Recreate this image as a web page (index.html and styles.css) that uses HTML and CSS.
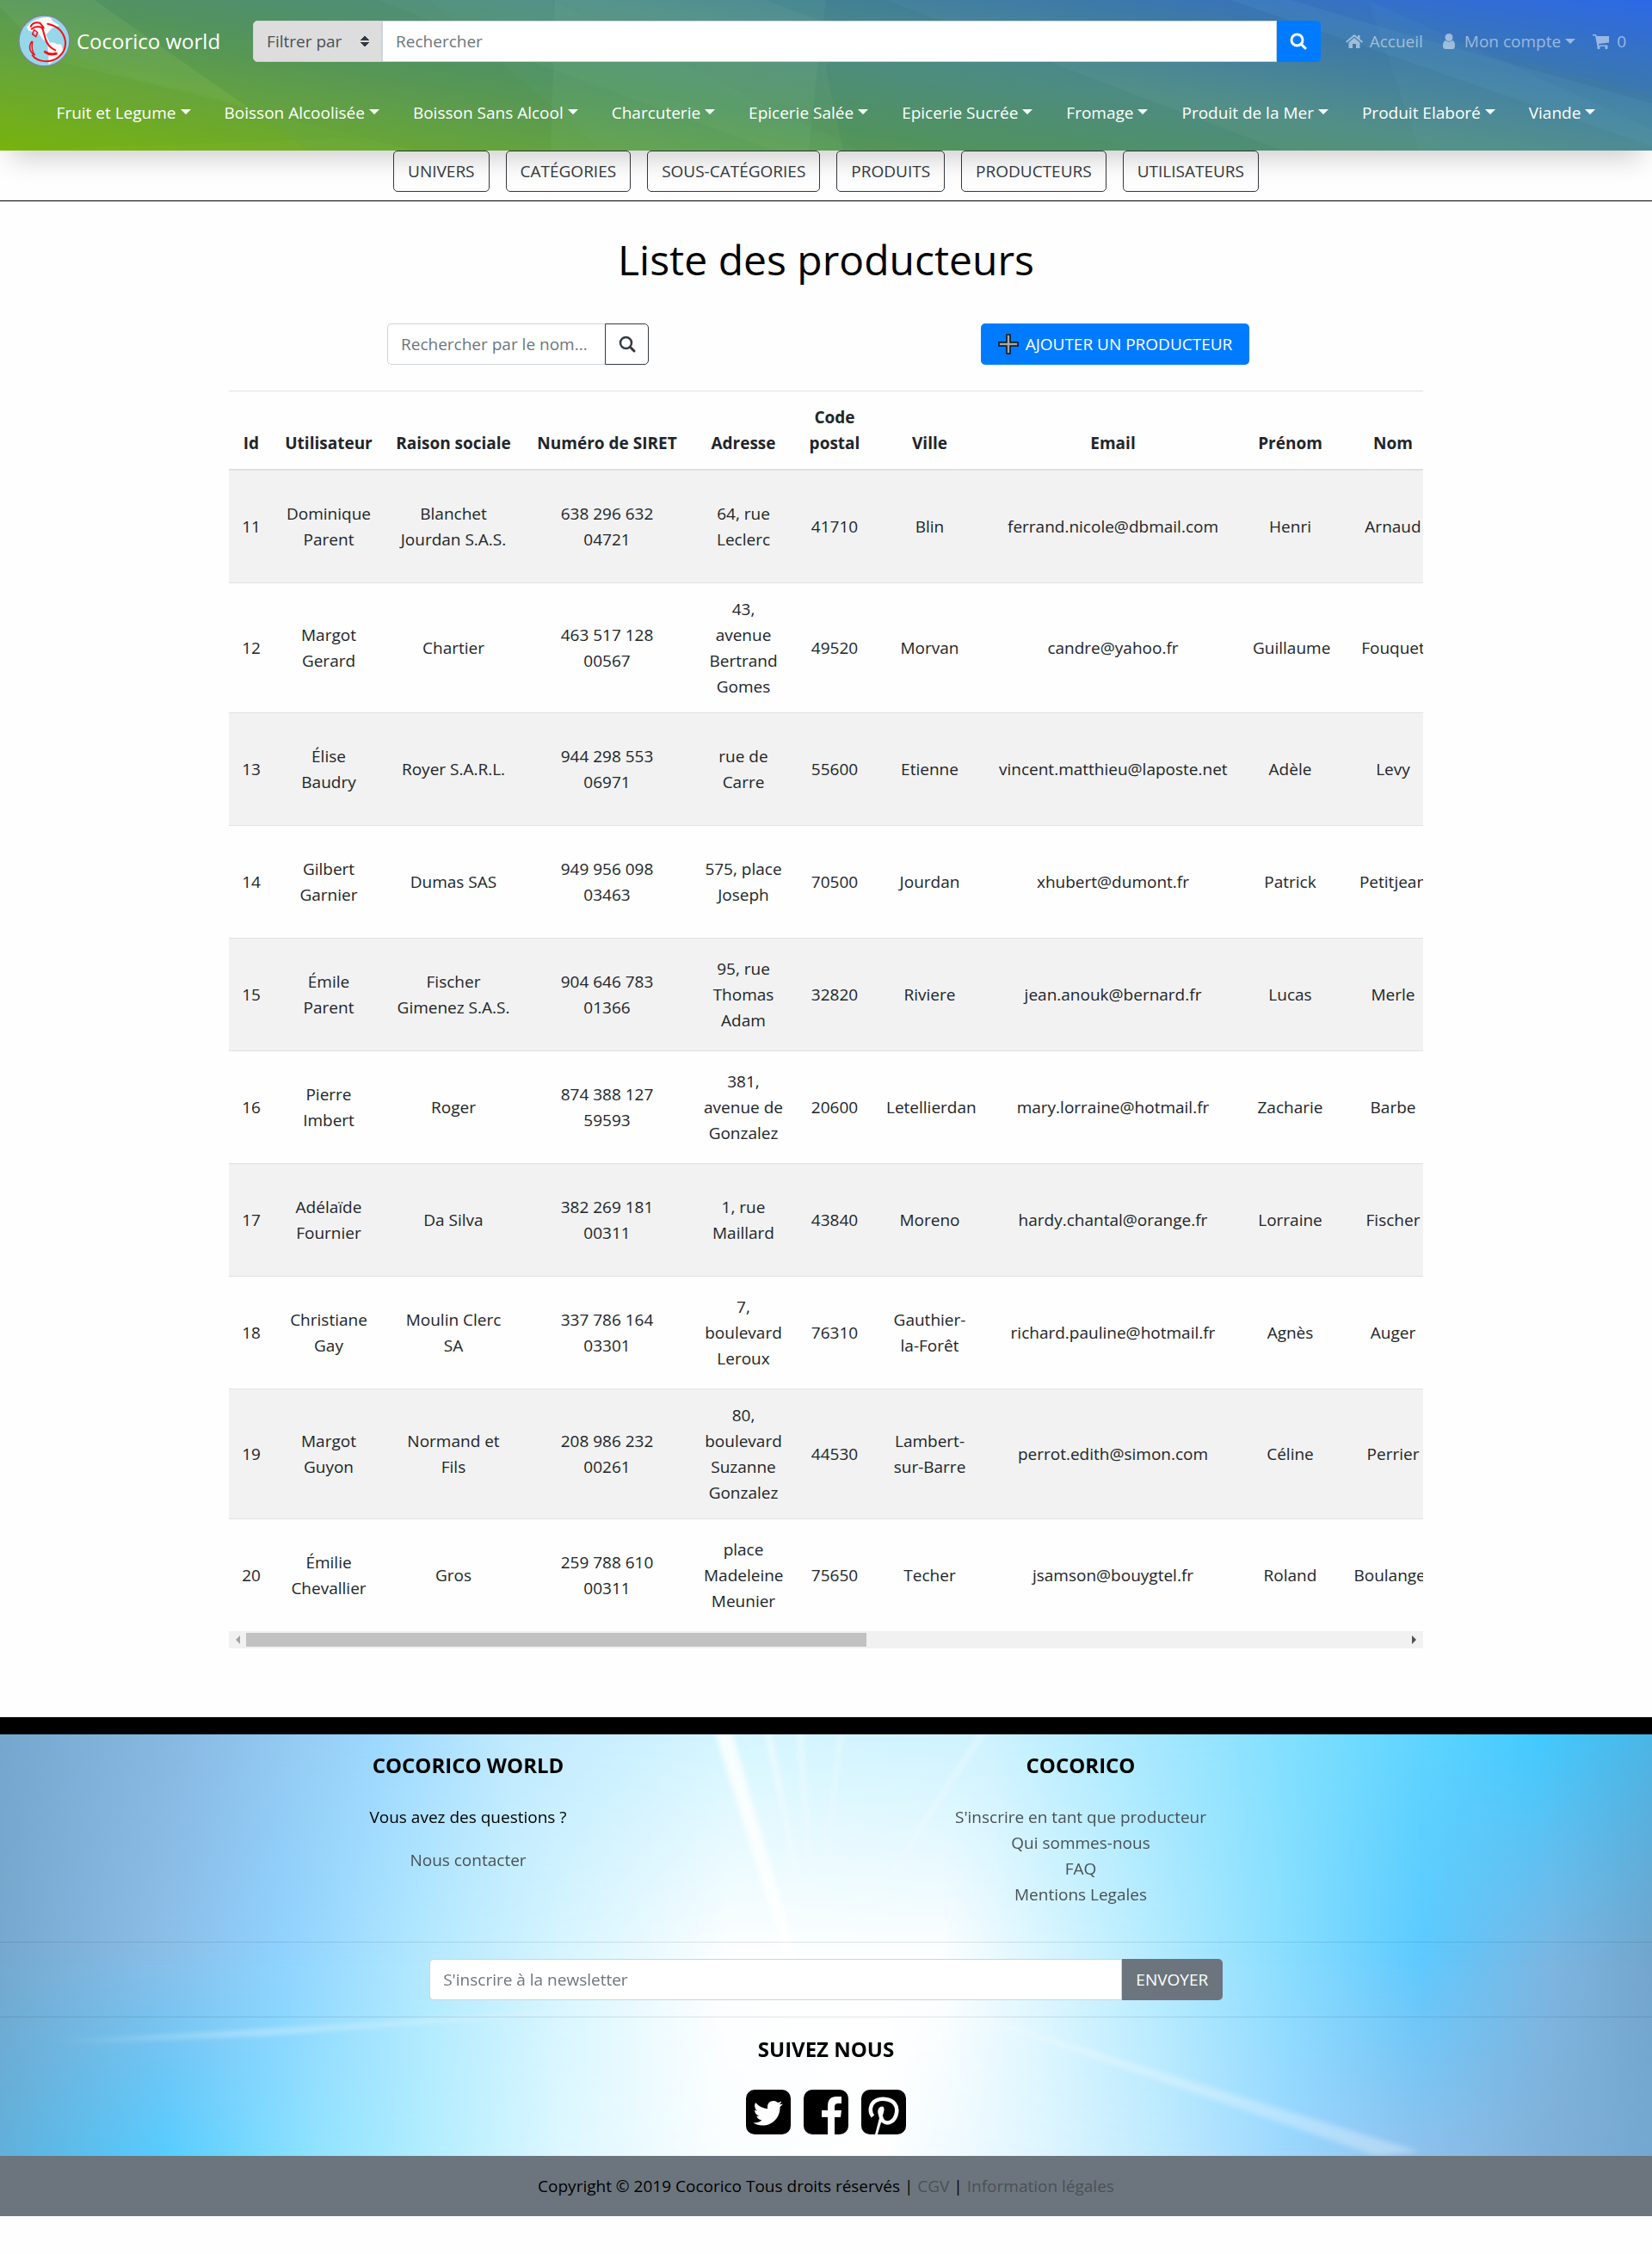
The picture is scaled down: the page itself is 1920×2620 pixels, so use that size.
FILE: index.html
```html
<!DOCTYPE html>
<html lang="fr"><head><meta charset="utf-8"><title>Cocorico world</title><link rel="stylesheet" href="styles.css"></head>
<body>
<header class="top">
<svg class="facets" viewBox="0 0 1920 175" preserveAspectRatio="none" aria-hidden="true">
<path d="M0 10Q60 75 240 110L420 160 0 175z" fill="#5c9c10" opacity=".1"/><path d="M0 0H110L360 175H480L300 128 60 70 0 8z" fill="#8fd070" opacity=".1"/><path d="M110 0H440L640 80 900 175H360z" fill="#2c7050" opacity=".08"/><path d="M500 0H640L1000 175H700z" fill="#7cc0a8" opacity=".05"/><path d="M640 175L645 0H960L950 80 940 175z" fill="#a0e0b0" opacity=".07"/><path d="M890 0H1030L1490 175H980L960 80 970 30z" fill="#10605a" opacity=".08"/><path d="M1430 0H1500L1600 30 1920 120V170z" fill="#70b8e0" opacity=".1"/><path d="M1590 0H1920V110L1620 30z" fill="#3070e0" opacity=".12"/><path d="M1590 0L1650 175H1920V150z" fill="#70b8d0" opacity=".06"/>
</svg>
<div class="bar">
<a class="brand" href="#"><svg class="logo" viewBox="0 0 64 64"><circle cx="32" cy="32" r="30" fill="#97d7ea" stroke="#7d858c" stroke-width="1.500"/><path d="M11 16Q20 4 36 4L40 5 42 9 50 14 41 17 34 25 39 35 31 31 25 23 14 20zM36 37Q40 31 47 36L52 36 54 43 46 54 37 60 37 49z" fill="#fdf8f5"/><g fill="none" stroke="#f40d15" stroke-linecap="round"><path d="M16 15Q19 9 27 11L31 16M17 18Q23 13 31 17" stroke-width="2"/><path d="M20 19L18 24 22 27 24 22z" stroke-width="1.500"/><path d="M29 16C34 25 31 37 45 43M36 12Q55 16 57 34C57 49 44 57 32 56Q22 55 18 49" stroke-width="2"/><path d="M17 33Q11 43 21 49Q16 43 18 33" stroke-width="1.500"/><path d="M33 45Q38 49 46 47" stroke-width="3"/></g></svg>Cocorico world</a>
<form class="search">
<select class="filter" aria-label="Filtrer par"><option>Filtrer par</option></select>
<input class="field" type="text" placeholder="Rechercher" aria-label="Rechercher">
<button class="go" type="button" aria-label="Lancer la recherche"><svg class="ico" viewBox="0 0 20 20"><circle cx="8.500" cy="8.500" r="6.500" fill="none" stroke="currentColor" stroke-width="3"/><path d="M13.500 13.500l4.500 4.500" stroke="currentColor" stroke-width="3" stroke-linecap="round"/></svg></button>
</form>
<nav class="account">
<a href="#"><svg class="ico" viewBox="0 0 20 20"><path d="M10 6L3.500 11.500V18H8V13h4v5h4.500v-6.500zM10 2L0 10.300l1.200 1.400L10 4.500l8.800 7.200L20 10.300 16.500 7.400V3H14v2.300z" fill="currentColor"/></svg>Accueil</a>
<a class="caret" href="#"><svg class="ico" viewBox="0 0 20 20"><circle cx="10" cy="5.500" r="4.500" fill="currentColor"/><path d="M6 9Q3 10 3 15Q3 19 6 19h8q3 0 3-4Q17 10 14 9Q10 12.500 6 9z" fill="currentColor"/></svg>Mon compte</a>
<a href="#"><svg class="ico" viewBox="0 0 20 20"><path d="M0 2h4l.6 2H19v7.500L7 13v1.500h10.500V16H5.500L3 3.500H0z" fill="currentColor"/><circle cx="7" cy="17.500" r="1.700" fill="currentColor"/><circle cx="16" cy="17.500" r="1.700" fill="currentColor"/></svg>0</a>
</nav>
</div>
<nav class="cats"><a class="caret" href="#">Fruit et Legume</a><a class="caret" href="#">Boisson Alcoolisée</a><a class="caret" href="#">Boisson Sans Alcool</a><a class="caret" href="#">Charcuterie</a><a class="caret" href="#">Epicerie Salée</a><a class="caret" href="#">Epicerie Sucrée</a><a class="caret" href="#">Fromage</a><a class="caret" href="#">Produit de la Mer</a><a class="caret" href="#">Produit Elaboré</a><a class="caret" href="#">Viande</a></nav>
</header>
<nav class="admin"><a href="#">UNIVERS</a><a href="#">CATÉGORIES</a><a href="#">SOUS-CATÉGORIES</a><a href="#">PRODUITS</a><a href="#">PRODUCTEURS</a><a href="#">UTILISATEURS</a></nav>
<main class="page">
<h1>Liste des producteurs</h1>
<div class="tools">
<form class="find"><input class="field" type="text" placeholder="Rechercher par le nom..." aria-label="Rechercher par le nom"><button class="find-go" type="button" aria-label="Rechercher"><svg class="ico" viewBox="0 0 20 20"><circle cx="8.500" cy="8.500" r="6.500" fill="none" stroke="currentColor" stroke-width="2.500"/><path d="M13.500 13.500l4.500 4.500" stroke="currentColor" stroke-width="3" stroke-linecap="round"/></svg></button></form>
<button class="add" type="button"><svg class="plus" viewBox="0 0 24 24"><path d="M10 1h4v9h9v4h-9v9h-4v-9H1v-4h9z" fill="#a8a8a8" stroke="#111" stroke-width="1.500"/></svg>AJOUTER UN PRODUCTEUR</button>
</div>
<div class="scroller">
<table>
<colgroup><col class="c-id"><col class="c-user"><col class="c-name"><col class="c-siret"><col class="c-addr"><col class="c-zip"><col class="c-city"><col class="c-mail"><col class="c-first"><col class="c-last"><col class="c-more"></colgroup>
<thead><tr><th>Id</th><th>Utilisateur</th><th>Raison sociale</th><th>Numéro de SIRET</th><th>Adresse</th><th>Code postal</th><th>Ville</th><th>Email</th><th>Prénom</th><th>Nom</th><th></th></tr></thead>
<tbody>
<tr><td>11</td><td>Dominique Parent</td><td>Blanchet Jourdan S.A.S.</td><td>638 296 632 04721</td><td>64, rue Leclerc</td><td>41710</td><td>Blin</td><td>ferrand.nicole@dbmail.com</td><td>Henri</td><td>Arnaud</td><td></td></tr>
<tr><td>12</td><td>Margot Gerard</td><td>Chartier</td><td>463 517 128 00567</td><td>43, avenue Bertrand Gomes</td><td>49520</td><td>Morvan</td><td>candre@yahoo.fr</td><td>Guillaume</td><td>Fouquet</td><td></td></tr>
<tr><td>13</td><td>Élise Baudry</td><td>Royer S.A.R.L.</td><td>944 298 553 06971</td><td>rue de Carre</td><td>55600</td><td>Etienne</td><td>vincent.matthieu@laposte.net</td><td>Adèle</td><td>Levy</td><td></td></tr>
<tr><td>14</td><td>Gilbert Garnier</td><td>Dumas SAS</td><td>949 956 098 03463</td><td>575, place Joseph</td><td>70500</td><td>Jourdan</td><td>xhubert@dumont.fr</td><td>Patrick</td><td>Petitjean</td><td></td></tr>
<tr><td>15</td><td>Émile Parent</td><td>Fischer Gimenez S.A.S.</td><td>904 646 783 01366</td><td>95, rue Thomas Adam</td><td>32820</td><td>Riviere</td><td>jean.anouk@bernard.fr</td><td>Lucas</td><td>Merle</td><td></td></tr>
<tr><td>16</td><td>Pierre Imbert</td><td>Roger</td><td>874 388 127 59593</td><td>381, avenue de Gonzalez</td><td>20600</td><td>Letellierdan</td><td>mary.lorraine@hotmail.fr</td><td>Zacharie</td><td>Barbe</td><td></td></tr>
<tr><td>17</td><td>Adélaïde Fournier</td><td>Da Silva</td><td>382 269 181 00311</td><td>1, rue Maillard</td><td>43840</td><td>Moreno</td><td>hardy.chantal@orange.fr</td><td>Lorraine</td><td>Fischer</td><td></td></tr>
<tr><td>18</td><td>Christiane Gay</td><td>Moulin Clerc SA</td><td>337 786 164 03301</td><td>7, boulevard Leroux</td><td>76310</td><td>Gauthier-la-Forêt</td><td>richard.pauline@hotmail.fr</td><td>Agnès</td><td>Auger</td><td></td></tr>
<tr><td>19</td><td>Margot Guyon</td><td>Normand et Fils</td><td>208 986 232 00261</td><td>80, boulevard Suzanne Gonzalez</td><td>44530</td><td>Lambert-sur-Barre</td><td>perrot.edith@simon.com</td><td>Céline</td><td>Perrier</td><td></td></tr>
<tr><td>20</td><td>Émilie Chevallier</td><td>Gros</td><td>259 788 610 00311</td><td>place Madeleine Meunier</td><td>75650</td><td>Techer</td><td>jsamson@bouygtel.fr</td><td>Roland</td><td>Boulanger</td><td></td></tr>
</tbody></table>
</div>
<div class="hbar" aria-hidden="true"><svg viewBox="0 0 20 20"><path d="M13 5v10l-5-5z" fill="#a3a3a3"/></svg><div class="rail"><div class="thumb"></div></div><svg viewBox="0 0 20 20"><path d="M7 5v10l5-5z" fill="#505050"/></svg></div>
</main>
<footer class="foot">
<div class="sky">
<svg class="rays" viewBox="0 0 1920 490" preserveAspectRatio="none" aria-hidden="true"><defs><filter id="soft"><feGaussianBlur stdDeviation="3"/></filter></defs><g fill="#fff" filter="url(#soft)"><path d="M830 -5h20L930 270h-14z" opacity=".8"/><path d="M888 -5h8L940 230z" opacity=".5"/><path d="M925 -5h8L945 200z" opacity=".4"/><path d="M975 -5h5L950 230z" opacity=".4"/><path d="M1140 -5h8L985 240z" opacity=".4"/><path d="M60 358L700 320 300 350z" opacity=".4"/><path d="M1050 300L1650 485 1600 490z" opacity=".3"/><path d="M1000 330L1032 495h-18z" opacity=".8"/></g></svg>
<div class="links">
<section><h2>COCORICO WORLD</h2><p>Vous avez des questions ?</p><a href="#">Nous contacter</a></section>
<section><h2>COCORICO</h2><ul><li><a href="#">S'inscrire en tant que producteur</a></li><li><a href="#">Qui sommes-nous</a></li><li><a href="#">FAQ</a></li><li><a href="#">Mentions Legales</a></li></ul></section>
</div>
<form class="news"><input class="field" type="email" placeholder="S'inscrire à la newsletter" aria-label="S'inscrire à la newsletter"><button class="send" type="button">ENVOYER</button></form>
<section class="follow"><h2>SUIVEZ NOUS</h2><div class="social">
<a href="#" aria-label="Twitter"><svg viewBox="0 0 52 52"><rect width="52" height="52" rx="10"/><path fill="#fff" d="M43 16.500q-1.500 2-3.500 3.400C40 32 31 41.500 19 41.500q-6 0-10.500-3 6 .3 10-3-4.500-.5-6.200-4.800 1.500.3 3-.2-5-1.500-5.300-6.700 1.500.8 3 .8Q8.500 21 11 15q6 6.800 14.200 7.200C24 16 28 13 32 13q3 0 5 2.100 2.300-.4 4.400-1.700-.7 2.400-3 3.900 2.500-.2 4.600-.8z"/></svg></a>
<a href="#" aria-label="Facebook"><svg viewBox="0 0 52 52"><rect width="52" height="52" rx="10"/><path fill="#fff" d="M28 52V32h-7v-8h7v-5q0-11 10-11h6v8h-4q-4 0-4 4v4h8l-1 8h-7v20z"/></svg></a>
<a href="#" aria-label="Pinterest"><svg viewBox="0 0 52 52"><rect width="52" height="52" rx="10"/><path d="M13.500 31Q10 27 11 21C12.500 12 22 10 28 11C38 12 42.500 19 41 27C39.500 36 32 41 26 37Q23 35 23 31" fill="none" stroke="#fff" stroke-width="4.500"/><path d="M21 33Q17 23 22 20Q27 18 26.500 24L23 38 19 52H16z" fill="#fff"/></svg></a>
</div></section>
</div>
<div class="copy">Copyright © 2019 Cocorico Tous droits réservés | <a href="#">CGV</a> | <a href="#">Information légales</a></div>
</footer>
</body></html>
```
FILE: styles.css
```css
*{box-sizing:border-box}
body{margin:0;background:#fefefe;color:#212529;font-family:"Open Sans","Noto Sans",sans-serif;font-size:19px;line-height:30px}
a{color:inherit;text-decoration:none}
button,input,select{font:inherit;margin:0}
h1,h2,p,ul{margin:0;padding:0}
ul{list-style:none}
.ico{width:20px;height:20px;flex:none}
.caret::after{content:"";display:inline-block;margin-left:5px;vertical-align:5px;border:6px solid transparent;border-top-color:currentColor;border-bottom:0}
.field{height:48px;padding:0 15px;border:1px solid #ced4da;background:#fff;color:#495057;min-width:0;flex:1}
.field::placeholder{color:#6c757d;opacity:1}
.top{position:relative;padding:10px 20px;background:linear-gradient(9deg,#7cb60c,#69a640 21%,#569660 38%,#528f88 58%,#3d79a8 78%,#2c67e8);box-shadow:0 20px 30px -12px rgba(0,0,0,.2);color:#fff}
.facets,.rays{position:absolute;inset:0;width:100%;height:100%}
.bar{position:relative;display:flex;align-items:center;height:76px;padding-bottom:1px}
.brand{display:flex;align-items:center;gap:6px;font-size:24px;margin-right:38px}
.logo{width:63px;height:63px}
.search{display:flex;flex:1}
.filter{appearance:none;width:150px;height:48px;padding:0 15px;border:1px solid #ced4da;border-radius:5px 0 0 5px;color:#495057;background:conic-gradient(from 140deg at 50% 0,#343a40 80deg,transparent 0) 124px 16px/10px 6px no-repeat,conic-gradient(from -40deg at 50% 100%,#343a40 80deg,transparent 0) 124px 24px/10px 6px no-repeat,#ddd}
.go{width:51px;border:0;border-radius:0 5px 5px 0;background:#007bff;color:#fff;display:flex;align-items:center;justify-content:center}
.account{display:flex;gap:20px;margin-left:29px;padding-right:10px;color:rgba(255,255,255,.5)}
.account a{display:flex;align-items:center;gap:8px}
.account .caret::after{margin-left:-3px}
.cats{position:relative;display:flex;justify-content:center;gap:39px;padding:30px 0 19px}
.admin{display:flex;justify-content:center;gap:19px;height:59px;border-bottom:1px solid #000}
.admin a{height:48px;padding:8px 16px;border:1px solid #343a40;border-radius:5px;color:#343a40}
.page{width:1388px;max-width:100%;margin:0 auto;padding-bottom:80px}
h1{padding-top:38px;font-size:48px;font-weight:500;line-height:60px;text-align:center;color:#000}
.tools{display:grid;grid-template-columns:1fr 1fr;gap:22px;justify-items:center;padding:44px 22px 30px 0}
.find{display:flex;width:304px}
.find .field{border-radius:5px 0 0 5px;border-right:0}
.find-go{display:flex;align-items:center;justify-content:center;width:51px;border:1px solid #343a40;border-radius:0 5px 5px 0;background:#fff;color:#343a40;padding:0}
.add{width:312px;height:48px;padding:0;display:flex;align-items:center;justify-content:center;gap:8px;border:0;border-radius:5px;background:#007bff;color:#fff}
.plus{width:24px;height:24px}
.scroller{overflow-x:auto;scrollbar-width:none}
.hbar{display:flex;height:20px;background:#f1f1f1}
.hbar svg{width:20px;height:20px}
.rail{flex:1;padding:2px 0}
.thumb{width:53.5%;height:16px;background:#c1c1c1}
table{table-layout:fixed;width:2594px;border-collapse:collapse;text-align:center}
th,td{padding:15px;border-top:1px solid #dee2e6}
th{vertical-align:bottom;font-weight:700;border-bottom:2px solid #dee2e6;padding:15px 10px}
td{height:131px;vertical-align:middle}
tbody tr:nth-child(odd){background:#f2f2f2}
.c-id{width:52px}.c-user{width:128px}.c-name{width:162px}.c-siret{width:195px}.c-addr{width:122px}.c-zip{width:90px}.c-city{width:131px}.c-mail{width:295px}.c-first{width:117px}.c-last{width:122px}
.foot{border-top:20px solid #000;color:#000;text-align:center}
.foot h2{font-size:24px;font-weight:700;line-height:30px}
.foot a{color:#495057}
/* three horizontal washes (top, middle, bottom) fade into each other */
.sky{position:relative;padding-bottom:25px;background:linear-gradient(90deg,#77a9cf,#8cbfe9 10%,#90d3ff 17%,#b5eaff 26%,#d8f6ff 34%,#fff 44%,#fff 57%,#c6f1ff 67%,#88deff 78%,#5ccaff 86%,#7db6e2 94%,#74a6cd)}
.sky::before,.sky::after{content:"";position:absolute;inset:0}
.sky::before{background:linear-gradient(90deg,#75a7cd,#88b9e3 11%,#9dd8ff 23%,#bfe9ff 31%,#d5f6ff 45%,#cdf2ff 60%,#a0e6ff 71%,#7cdeff 79%,#42caff 93%,#4ab5e5);mask-image:linear-gradient(#000,transparent 55%)}
.sky::after{background:linear-gradient(90deg,#60b0da,#56ccff 10%,#8fe2ff 19%,#b2edff 26%,#dcf7ff 34%,#f8fdff 43%,#fff 53%,#def5ff 63%,#c0eaff 70%,#9cd6ff 78%,#90c3ee 85%,#7fb0d8 94%,#74a8d0);mask-image:linear-gradient(transparent 50%,#000)}
.rays{z-index:1}
.links,.news,.follow{position:relative;z-index:2}
.links{display:grid;grid-template-columns:1fr 1fr;padding:21px 308px 40px 188px}
.links h2{margin-bottom:30px}
.links p{margin-bottom:20px}
.news{display:flex;justify-content:center;padding:19px 26%;border:1px solid rgba(0,0,0,.1);border-width:1px 0}
.news .field{border-radius:5px 0 0 5px}
.send{width:117px;border:0;padding:0;background:#6c757d;color:#fff;border-radius:0 5px 5px 0}
.follow{padding-top:22px}
.social{display:flex;justify-content:center;gap:15px;padding-top:32px}
.social svg{display:block;width:52px;height:52px}
.copy{padding:20px 0;background:#6c757d}
```
